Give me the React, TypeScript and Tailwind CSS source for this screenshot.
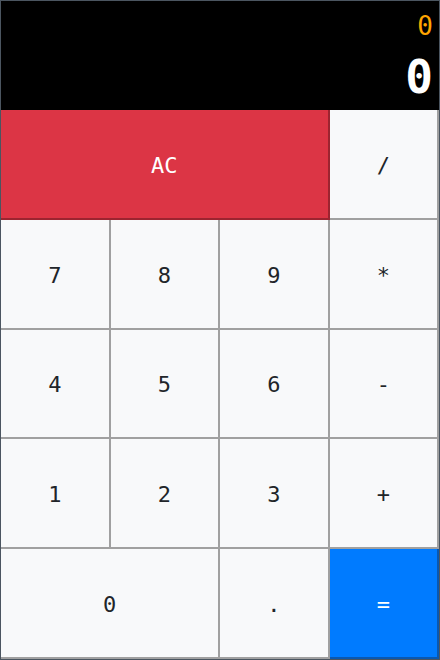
const keys: { label: string; span?: string; tone?: 'red' | 'blue' }[] = [
  { label: 'AC', span: 'col-span-3', tone: 'red' },
  { label: '/' },
  { label: '7' },
  { label: '8' },
  { label: '9' },
  { label: '*' },
  { label: '4' },
  { label: '5' },
  { label: '6' },
  { label: '-' },
  { label: '1' },
  { label: '2' },
  { label: '3' },
  { label: '+' },
  { label: '0', span: 'col-span-2' },
  { label: '.' },
  { label: '=', tone: 'blue' },
];

function Key({ label, span, tone }: { label: string; span?: string; tone?: 'red' | 'blue' }) {
  const colors =
    tone === 'red'
      ? 'bg-[#dc3545] text-white border-[#9c2430]'
      : tone === 'blue'
      ? 'bg-[#007bff] text-white border-[#0a58b0]'
      : 'bg-[#f8f9fa] text-[#212529] border-[#a0a0a0]';
  return (
    <button
      className={`${span ?? ''} ${colors} flex items-center justify-center border-r-2 border-b-2 pt-[4px] text-[22px] leading-none`}
    >
      {label}
    </button>
  );
}

export default function App() {
  return (
    <div
      className="flex h-[660px] w-[440px] flex-col border border-[#4b5560] bg-black"
      style={{ fontFamily: '"DejaVu Sans Mono", monospace' }}
    >
      <div className="flex h-[109px] flex-col items-end px-[6px] pt-[10px]">
        <div className="text-[26px] leading-[30px] text-[#ffa500]">0</div>
        <div className="mt-[12px] text-[46px] font-bold leading-[48px] text-white">0</div>
      </div>
      <div className="grid flex-1 grid-cols-4 grid-rows-5">
        {keys.map((k) => (
          <Key key={k.label} {...k} />
        ))}
      </div>
    </div>
  );
}
